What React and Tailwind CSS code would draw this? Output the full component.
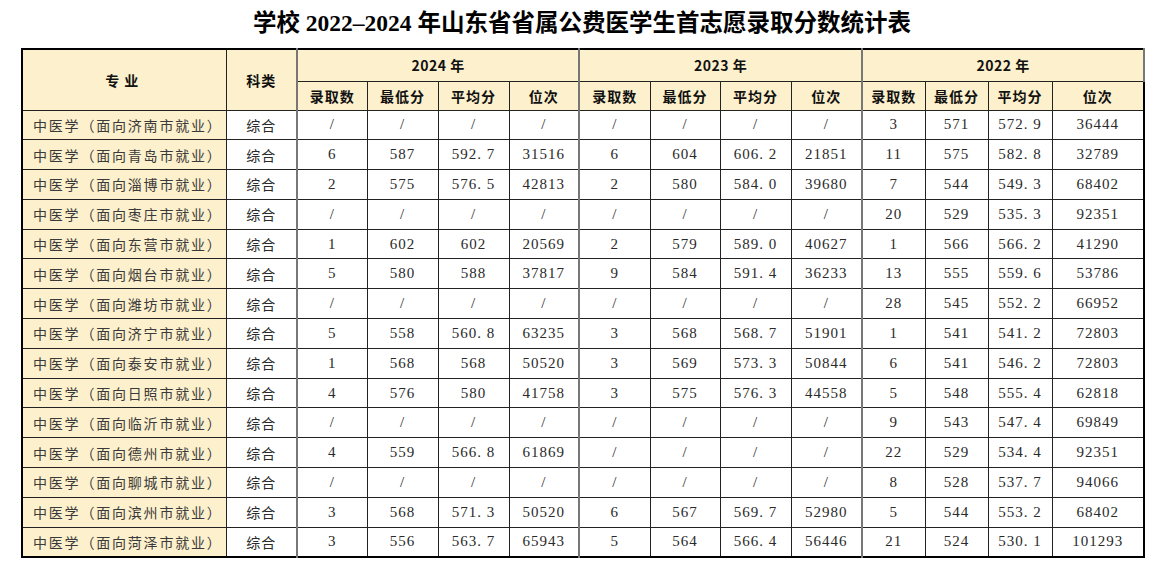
const rows = [
  ["济南", ["/", "/", "/", "/"], ["/", "/", "/", "/"], ["3", "571", "572.9", "36444"]],
  ["青岛", ["6", "587", "592.7", "31516"], ["6", "604", "606.2", "21851"], ["11", "575", "582.8", "32789"]],
  ["淄博", ["2", "575", "576.5", "42813"], ["2", "580", "584.0", "39680"], ["7", "544", "549.3", "68402"]],
  ["枣庄", ["/", "/", "/", "/"], ["/", "/", "/", "/"], ["20", "529", "535.3", "92351"]],
  ["东营", ["1", "602", "602", "20569"], ["2", "579", "589.0", "40627"], ["1", "566", "566.2", "41290"]],
  ["烟台", ["5", "580", "588", "37817"], ["9", "584", "591.4", "36233"], ["13", "555", "559.6", "53786"]],
  ["潍坊", ["/", "/", "/", "/"], ["/", "/", "/", "/"], ["28", "545", "552.2", "66952"]],
  ["济宁", ["5", "558", "560.8", "63235"], ["3", "568", "568.7", "51901"], ["1", "541", "541.2", "72803"]],
  ["泰安", ["1", "568", "568", "50520"], ["3", "569", "573.3", "50844"], ["6", "541", "546.2", "72803"]],
  ["日照", ["4", "576", "580", "41758"], ["3", "575", "576.3", "44558"], ["5", "548", "555.4", "62818"]],
  ["临沂", ["/", "/", "/", "/"], ["/", "/", "/", "/"], ["9", "543", "547.4", "69849"]],
  ["德州", ["4", "559", "566.8", "61869"], ["/", "/", "/", "/"], ["22", "529", "534.4", "92351"]],
  ["聊城", ["/", "/", "/", "/"], ["/", "/", "/", "/"], ["8", "528", "537.7", "94066"]],
  ["滨州", ["3", "568", "571.3", "50520"], ["6", "567", "569.7", "52980"], ["5", "544", "553.2", "68402"]],
  ["菏泽", ["3", "556", "563.7", "65943"], ["5", "564", "566.4", "56446"], ["21", "524", "530.1", "101293"]],
];

const widths = [204, 71, 70, 71, 71, 70, 71, 70, 71, 71, 63, 63, 64, 92];
const years = ["2024", "2023", "2022"];
const sub = ["录取数", "最低分", "平均分", "位次"];

const serif = "font-['Liberation_Serif','Noto_Sans_CJK_SC',serif]";
const head = "font-['Noto_Sans_CJK_SC',sans-serif] font-bold text-[14px] leading-none text-[#111]";

function fmt(v) {
  // the source uses a wide dot in decimals
  return v.replace(".", ". ");
}

export default function App() {
  return (
    <div className="w-[1164px] h-[579px] bg-white">
      <h1 className={`pt-[8px] h-[48px] text-center text-[23.5px] leading-[30px] font-bold text-black ${serif}`}>
        学校 2022–2024 年山东省省属公费医学生首志愿录取分数统计表
      </h1>
      <table className="ml-[21px] border-collapse border-2 border-black table-fixed w-[1122px]">
        <colgroup>
          {widths.map((w, i) => (
            <col key={i} style={{ width: w }} />
          ))}
        </colgroup>
        <thead>
          <tr className="h-[32px] bg-[#fdf0cc]">
            <th rowSpan={2} className={`border border-[#222] tracking-[5px] ${head}`}>专业</th>
            <th rowSpan={2} className={`border border-[#222] tracking-[1px] ${head}`}>科类</th>
            {years.map((y) => (
              <th key={y} colSpan={4} className={`border border-[#222] border-x-2 border-x-[#777] tracking-[0.5px] ${head}`}>
                {y} 年
              </th>
            ))}
          </tr>
          <tr className="h-[29px] bg-[#fdf0cc]">
            {years.map((y) =>
              sub.map((s, i) => (
                <th
                  key={y + s}
                  className={`border border-[#222] tracking-[1px] ${head} ${i === 0 ? "border-l-2 border-l-[#777]" : ""}`}
                >
                  {s}
                </th>
              ))
            )}
          </tr>
        </thead>
        <tbody className={`text-[15px] leading-none text-[#2a2a2a] ${serif}`}>
          {rows.map(([city, a, b, c]) => (
            <tr key={city} className="h-[29.8px]">
              <td className="border border-[#222] bg-[#fdf0cc] pl-[10px] whitespace-nowrap text-[14px] tracking-[1.8px] text-[#3a3a3a] font-['Noto_Sans_CJK_SC',sans-serif]">
                中医学（面向{city}市就业）
              </td>
              <td className="border border-[#222] text-center text-[14px] tracking-[1px] font-['Noto_Sans_CJK_SC',sans-serif]">
                综合
              </td>
              {[a, b, c].map((g, gi) =>
                g.map((v, i) => (
                  <td
                    key={gi + "-" + i}
                    className={`border border-[#222] text-center whitespace-nowrap tracking-[1px] ${
                      i === 0 ? "border-l-2 border-l-[#777]" : ""
                    }`}
                  >
                    {fmt(v)}
                  </td>
                ))
              )}
            </tr>
          ))}
        </tbody>
      </table>
    </div>
  );
}
